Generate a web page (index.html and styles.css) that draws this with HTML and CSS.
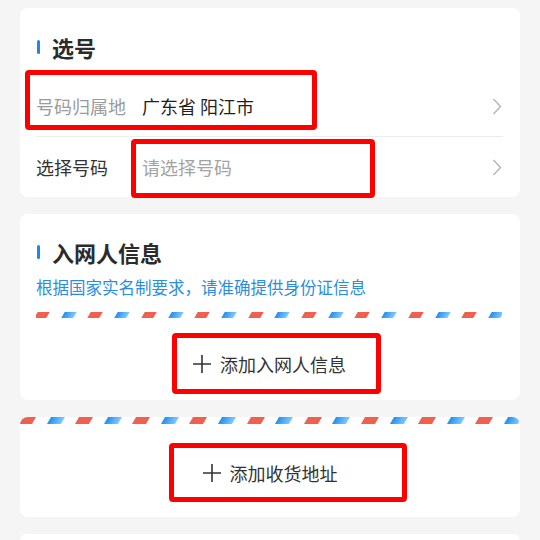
FILE: index.html
```html
<!DOCTYPE html>
<html lang="zh-CN">
<head>
    <meta charset="UTF-8">
    <meta name="viewport" content="width=device-width, initial-scale=1.0">
    <title>选号</title>
    <link rel="stylesheet" href="styles.css">
</head>
<body>

<div class="card pickCard">
    <div class="cardTitle"><span class="titleBar"></span>选号</div>
    <div class="formRow divided">
        <span class="rowLabel muted">号码归属地</span>
        <span class="rowValue">广东省 阳江市</span>
        <svg class="chevron" width="10" height="17" viewBox="0 0 10 17"><polyline points="1.5,1 8.5,8.5 1.5,16" fill="none" stroke="#b4b4b4" stroke-width="1.4"/></svg>
        <span class="mark markArea"></span>
    </div>
    <div class="formRow">
        <span class="rowLabel">选择号码</span>
        <span class="rowValue muted">请选择号码</span>
        <svg class="chevron" width="10" height="17" viewBox="0 0 10 17"><polyline points="1.5,1 8.5,8.5 1.5,16" fill="none" stroke="#b4b4b4" stroke-width="1.4"/></svg>
        <span class="mark markNumber"></span>
    </div>
</div>

<div class="card personCard">
    <div class="cardTitle"><span class="titleBar"></span>入网人信息</div>
    <div class="notice">根据国家实名制要求，请准确提供身份证信息</div>
    <div class="stripes" id="personStripes"></div>
    <div class="addRow">
        <svg class="plus" width="18" height="18" viewBox="0 0 18 18"><path d="M9 0V18M0 9H18" stroke="#333" stroke-width="1.6"/></svg>
        <span>添加入网人信息</span>
        <span class="mark markPerson"></span>
    </div>
</div>

<div class="card addressCard">
    <div class="stripes wide" id="addressStripes"></div>
    <div class="addRow">
        <svg class="plus" width="18" height="18" viewBox="0 0 18 18"><path d="M9 0V18M0 9H18" stroke="#333" stroke-width="1.6"/></svg>
        <span>添加收货地址</span>
        <span class="mark markAddress"></span>
    </div>
</div>

<div class="card nextCard"></div>

<script>
    // envelope border: 18 pieces, red and blue in turn
    ['personStripes', 'addressStripes'].forEach(function(id) {
        var box = document.getElementById(id);
        for (var i = 0; i < 18; i++) {
            var piece = document.createElement('span');
            piece.className = i % 2 ? 'piece blue' : 'piece red';
            box.appendChild(piece);
        }
    });
</script>

</body>
</html>
```

FILE: styles.css
```css
body {
    margin: 0;
    padding: 8px 20px 0;
    background: #f5f5f5;
    font-family: "Noto Sans CJK SC", "Noto Sans", sans-serif;
    color: #333;
}

.card {
    position: relative;
    background: #fff;
    border-radius: 8px;
    margin-bottom: 17px;
    padding: 0 17px 0 16px;
}

.cardTitle {
    display: flex;
    align-items: center;
    height: 30px;
    font-size: 22px;
    font-weight: bold;
    color: #2b2b2b;
}

.pickCard {
    padding-top: 24px;
}

.pickCard .cardTitle {
    margin-bottom: 14px;
}

.titleBar {
    width: 3px;
    height: 14px;
    margin: 0 12px 0 1px;
    border-radius: 2px;
    background: #1e88e5;
}

.formRow {
    position: relative;
    display: flex;
    align-items: center;
    height: 60px;
    font-size: 18px;
}

.formRow.divided {
    border-bottom: 1px solid #ececec;
}

.rowLabel {
    width: 106px;
    flex-shrink: 0;
}

.rowValue {
    flex-grow: 1;
    color: #1f1f1f;
}

.muted {
    color: #9b9b9b;
}

.rowValue.muted {
    color: #a3a3a3;
}

.chevron {
    margin-right: 1px;
}

.personCard {
    padding-top: 23px;
    padding-bottom: 6px;
}

.notice {
    margin-top: 9px;
    font-size: 16.5px;
    line-height: 22px;
    color: #2a8ee0;
}

.stripes {
    display: flex;
    justify-content: space-between;
    height: 6px;
    margin: 14px 1px 15px 0;
    overflow: hidden;
}

.piece {
    width: 12px;
    height: 6px;
    transform: skewX(-30deg);
}

.piece.red {
    background: #f0604f;
}

.piece.blue {
    background: linear-gradient(to right, #1f8ff0, #82caff);
}

.addRow {
    position: relative;
    display: flex;
    align-items: center;
    justify-content: center;
    gap: 9px;
    height: 61px;
    font-size: 18px;
    color: #333;
}

.addressCard {
    padding: 0 0 15px;
    overflow: hidden;
}

.stripes.wide {
    height: 7px;
    margin: 0 0 19px;
}

.stripes.wide .piece {
    width: 14px;
    height: 7px;
}

.addressCard .addRow {
    height: 59px;
}

.nextCard {
    height: 6px;
    margin-bottom: 0;
    border-radius: 8px 8px 0 0;
}

/* red annotation frames laid over the content */
.mark {
    position: absolute;
    box-sizing: border-box;
    border: 5px solid #ff0000;
    border-radius: 4px;
}

.markArea {
    left: -11px;
    top: -6px;
    width: 292px;
    height: 60px;
}

.markNumber {
    left: 95px;
    top: 2px;
    width: 244px;
    height: 59px;
}

.markPerson {
    left: 136px;
    top: 0;
    width: 209px;
    height: 61px;
}

.markAddress {
    left: 149px;
    top: 0;
    width: 238px;
    height: 59px;
}
```
